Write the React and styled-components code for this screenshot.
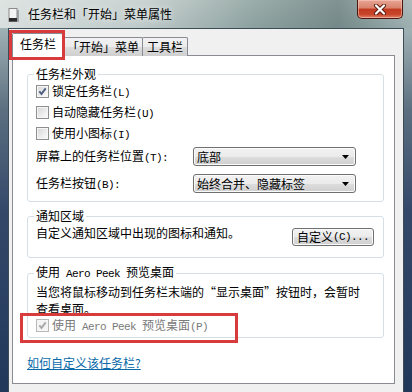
import styled, { createGlobalStyle } from "styled-components";

const Global = createGlobalStyle`
  html, body { margin: 0; padding: 0; background: #22385a; }
  body {
    font-family: "Noto Sans CJK SC", "Liberation Sans", sans-serif;
    font-size: 12px;
    line-height: 14px;
    color: #000;
  }
`;

const Window = styled.div`
  width: 412px;
  height: 392px;
  overflow: hidden;
  display: flex;
  flex-direction: column;
  background: linear-gradient(to bottom, #c4cecd 0px, #9fb0b3 30px, #5b6f80 110px, #34496a 210px, #22385a 100%);
`;

const TitleBar = styled.div`
  height: 28px;
  flex: none;
  display: flex;
  align-items: flex-start;
  background: linear-gradient(to right, rgba(226,231,229,0.85) 0%, rgba(206,215,213,0.6) 35%, rgba(120,145,140,0.55) 62%, rgba(84,108,106,0.6) 82%, rgba(150,170,170,0.45) 100%);
`;

const TitleIcon = styled.svg`
  margin: 7px 0 0 5px;
  flex: none;
`;

const TitleText = styled.div`
  margin: 7px 0 0 7px;
  text-shadow: 0 0 6px rgba(255,255,255,0.9);
`;

const CloseBtn = styled.div`
  margin-left: auto;
  margin-right: 9px;
  width: 46px;
  height: 19px;
  box-sizing: border-box;
  border: 1px solid #4a1810;
  border-top: none;
  border-radius: 0 0 5px 5px;
  background: linear-gradient(to bottom, #e6a594 0%, #d9826c 45%, #c23a20 50%, #c8452a 80%, #e0846a 100%);
  box-shadow: inset 0 0 0 1px rgba(255,210,200,0.5);
  display: flex;
  align-items: center;
  justify-content: center;
`;

const Client = styled.div`
  flex: 1;
  margin: 0 8px;
  background: #f0f0f0;
  border: 1px solid #3d4d58;
  border-bottom: none;
  padding: 2px 8px 8px 3px;
  display: flex;
  flex-direction: column;
  min-height: 0;
`;

const TabStrip = styled.div`
  display: flex;
  align-items: flex-end;
  height: 25px;
  margin-bottom: -1px;
  position: relative;
  z-index: 1;
`;

const Tab = styled.div`
  position: relative;
  box-sizing: border-box;
  border: 1px solid #898c95;
  border-bottom: none;
  border-radius: 2px 2px 0 0;
  height: ${(p) => (p.$active ? 23 : 19)}px;
  padding: ${(p) => (p.$active ? "3px 6px 0 7px" : `2px ${p.$pad}px 0`)};
  margin-left: ${(p) => p.$ml || 0}px;
  background: ${(p) => (p.$active ? "#fff" : "linear-gradient(to bottom, #f2f2f2 0%, #ebebeb 50%, #dddddd 51%, #cfcfcf 100%)")};
  z-index: ${(p) => (p.$active ? 2 : 1)};
  white-space: nowrap;
`;

const Highlight = styled.span`
  position: absolute;
  top: ${(p) => p.$t}px;
  left: ${(p) => p.$l}px;
  width: ${(p) => p.$w}px;
  height: ${(p) => p.$h}px;
  border: 3px solid #d83b3b;
  box-sizing: border-box;
  pointer-events: none;
`;

const Panel = styled.div`
  flex: 1;
  background: #fff;
  border: 1px solid #898c95;
  padding: 11px 10px 0 14px;
  display: flex;
  flex-direction: column;
`;

const Group = styled.fieldset`
  margin: ${(p) => p.$mt || 0}px 0 0 0;
  border: 1px solid #d5dfe5;
  border-radius: 3px;
  padding: 0 9px ${(p) => p.$pb || 0}px 8px;
  min-width: 0;
`;

const Legend = styled.legend`
  padding: 0 2px;
  margin-left: -2px;
  line-height: 14px;
  white-space: nowrap;
`;

const Mn = styled.span`
  font-family: "Liberation Mono", monospace;
  font-size: 11px;
  letter-spacing: -0.6px;
  white-space: pre;
`;

const CheckRow = styled.div`
  position: relative;
  height: 21px;
  margin-top: ${(p) => p.$mt || 0}px;
  display: flex;
  align-items: center;
  gap: 3px;
  color: ${(p) => (p.$disabled ? "#7a7a7a" : "#000")};
  white-space: nowrap;
`;

const Box = styled.span`
  width: 13px;
  height: 13px;
  box-sizing: border-box;
  border: 1px solid ${(p) => (p.$disabled ? "#b8b8b8" : "#8e8f8f")};
  background: ${(p) => (p.$disabled ? "#f4f4f4" : "linear-gradient(135deg, #d6d6d6 0%, #ececec 55%, #fdfdfd 100%)")};
  box-shadow: inset 0 0 0 1px #f6f6f6;
  display: flex;
  align-items: center;
  justify-content: center;
  flex: none;
`;

const FieldRow = styled.div`
  display: grid;
  grid-template-columns: 157px 163px;
  align-items: center;
  height: 19px;
  margin-top: ${(p) => p.$mt}px;
  white-space: nowrap;
`;

const Combo = styled.div`
  height: 19px;
  box-sizing: border-box;
  border: 1px solid #707070;
  border-radius: 3px;
  background: linear-gradient(to bottom, #f2f2f2 0%, #ebebeb 50%, #dddddd 51%, #cfcfcf 100%);
  box-shadow: inset 0 0 0 1px #fbfbfb;
  display: flex;
  align-items: center;
  justify-content: space-between;
  padding: 0 6px 0 3px;
`;

const NotifyRow = styled.div`
  display: flex;
  justify-content: space-between;
  align-items: flex-start;
  padding-top: 3px;
  white-space: nowrap;
`;

const Button = styled.div`
  width: 82px;
  height: 18px;
  margin-top: 2px;
  box-sizing: border-box;
  border: 1px solid #707070;
  border-radius: 3px;
  background: linear-gradient(to bottom, #f2f2f2 0%, #ebebeb 50%, #dddddd 51%, #cfcfcf 100%);
  box-shadow: inset 0 0 0 1px #fbfbfb;
  display: flex;
  align-items: center;
  justify-content: center;
  white-space: nowrap;
`;

const DescLine = styled.div`
  line-height: 17px;
  white-space: nowrap;
  margin-top: ${(p) => p.$mt || 0}px;
`;

const Link = styled.a`
  margin-top: 18px;
  color: #0a6aa8;
  text-decoration: underline;
  align-self: flex-start;
  cursor: pointer;
`;

const Check = ({ checked, disabled }) => (
  <Box $disabled={disabled}>
    {checked && (
      <svg width="9" height="9" viewBox="0 0 9 9">
        <path d="M1.3 4.4 L3.5 6.9 L7.7 1.4" fill="none" stroke={disabled ? "#a9a9a9" : "#4f5f82"} strokeWidth="1.9" />
      </svg>
    )}
  </Box>
);

const Arrow = () => (
  <svg width="7" height="4" viewBox="0 0 7 4">
    <path d="M0 0 H7 L3.5 4 Z" fill="#000" />
  </svg>
);

export default function App() {
  return (
    <>
      <Global />
      <Window>
        <TitleBar>
          <TitleIcon width="16" height="16" viewBox="0 0 16 16">
            <rect x="4" y="1.5" width="8" height="13" fill="#f4f4f4" stroke="#8a8a8a" />
            <rect x="4" y="11" width="8" height="3.5" fill="#2a2a2a" />
            <rect x="12.5" y="3" width="1.5" height="12" fill="rgba(0,0,0,0.25)" />
          </TitleIcon>
          <TitleText>任务栏和「开始」菜单属性</TitleText>
          <CloseBtn>
            <svg width="14" height="11" viewBox="0 0 14 11">
              <path d="M3 1.5 L11 9.5 M11 1.5 L3 9.5" stroke="#5a1a10" strokeWidth="4" strokeLinecap="round" />
              <path d="M3 1.5 L11 9.5 M11 1.5 L3 9.5" stroke="#fff" strokeWidth="2.2" strokeLinecap="round" />
            </svg>
          </CloseBtn>
        </TitleBar>
        <Client>
          <TabStrip>
            <Tab $active>
              任务栏
              <Highlight $t={-4} $l={-4} $w={56} $h={30} />
            </Tab>
            <Tab $pad={3}>「开始」菜单</Tab>
            <Tab $pad={4} $ml={-1}>工具栏</Tab>
          </TabStrip>
          <Panel>
            <Group $pb={8}>
              <Legend>任务栏外观</Legend>
              <CheckRow>
                <Check checked />
                <span>锁定任务栏<Mn>(L)</Mn></span>
              </CheckRow>
              <CheckRow>
                <Check />
                <span>自动隐藏任务栏<Mn>(U)</Mn></span>
              </CheckRow>
              <CheckRow>
                <Check />
                <span>使用小图标<Mn>(I)</Mn></span>
              </CheckRow>
              <FieldRow $mt={3}>
                <span>屏幕上的任务栏位置<Mn>(T):</Mn></span>
                <Combo>
                  <span>底部</span>
                  <Arrow />
                </Combo>
              </FieldRow>
              <FieldRow $mt={8}>
                <span>任务栏按钮<Mn>(B):</Mn></span>
                <Combo>
                  <span>始终合并、隐藏标签</span>
                  <Arrow />
                </Combo>
              </FieldRow>
            </Group>

            <Group $mt={7} $pb={11}>
              <Legend>通知区域</Legend>
              <NotifyRow>
                <span>自定义通知区域中出现的图标和通知。</span>
                <Button>自定义<Mn>(C)...</Mn></Button>
              </NotifyRow>
            </Group>

            <Group $mt={7} $pb={1}>
              <Legend>使用<Mn> Aero Peek </Mn>预览桌面</Legend>
              <DescLine $mt={2}>当您将鼠标移动到任务栏末端的“显示桌面”按钮时，会暂时</DescLine>
              <DescLine>查看桌面。</DescLine>
              <CheckRow $mt={-2} $disabled>
                <Check checked disabled />
                <span>使用<Mn> Aero Peek </Mn>预览桌面<Mn>(P)</Mn></span>
                <Highlight $t={-2} $l={-16} $w={218} $h={30} />
              </CheckRow>
            </Group>

            <Link>如何自定义该任务栏?</Link>
          </Panel>
        </Client>
      </Window>
    </>
  );
}
